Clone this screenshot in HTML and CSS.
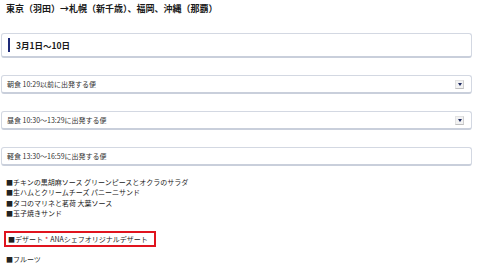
FILE: index.html
```html
<!DOCTYPE html>
<html lang="ja">
<head>
<meta charset="utf-8">
<link rel="stylesheet" href="styles.css">
</head>
<body>
<div class="page">
  <h1 class="title">東京（羽田）→札幌（新千歳）、福岡、沖縄（那覇）</h1>
  <div class="period"><span class="bar"></span><span class="period-text">3月1日～10日</span></div>
  <div class="select"><span>朝食 10:29以前に出発する便</span><span class="arrow"></span></div>
  <div class="select"><span>昼食 10:30～13:29に出発する便</span><span class="arrow"></span></div>
  <div class="select"><span>軽食 13:30～16:59に出発する便</span></div>
  <ul class="menu">
    <li>■チキンの黒胡麻ソース グリーンピースとオクラのサラダ</li>
    <li>■生ハムとクリームチーズ パニーニサンド</li>
    <li>■タコのマリネと茗荷 大葉ソース</li>
    <li>■玉子焼きサンド</li>
  </ul>
  <div class="highlight">■デザート <span class="star">*</span> ANAシェフオリジナルデザート</div>
  <p class="fruit">■フルーツ</p>
</div>
</body>
</html>
```
FILE: styles.css
```css
html, body {
  margin: 0;
  padding: 0;
  background: #fff;
}
body {
  font-family: "Noto Sans CJK JP", "Noto Sans", sans-serif;
  color: #222;
}
.page {
  width: 471px;
  padding: 0 0 0 1px;
}
.title {
  margin: 0;
  padding: 3px 0 0 5px;
  font-size: 9px;
  line-height: 12px;
  font-weight: bold;
  color: #1a1a1a;
}
.period {
  margin-top: 18px;
  height: 22px;
  border: 1px solid #d3d8e2;
  border-bottom: 2px solid #c9cfdb;
  border-radius: 3px;
  display: flex;
  align-items: center;
  padding-left: 6px;
  gap: 6px;
}
.bar {
  width: 2px;
  height: 14px;
  background: #1e2a78;
}
.period-text {
  font-size: 8.5px;
  font-weight: bold;
  color: #1a1a1a;
}
.select {
  margin-top: 17px;
  height: 16px;
  border: 1px solid #d3d8e2;
  border-bottom: 2px solid #c9cfdb;
  border-radius: 3px;
  display: flex;
  align-items: center;
  justify-content: space-between;
  padding: 0 7px 0 5px;
  font-size: 7px;
  color: #333;
}
.arrow {
  width: 9px;
  height: 9px;
  background: #f2f2f2;
  border: 1px solid #e2e2e2;
  border-bottom-color: #bfbfbf;
  border-right-color: #cfcfcf;
  box-sizing: border-box;
  display: flex;
  align-items: center;
  justify-content: center;
}
.arrow::before {
  content: "";
  border-left: 2.5px solid transparent;
  border-right: 2.5px solid transparent;
  border-top: 3px solid #1e2a60;
}
.menu {
  list-style: none;
  margin: 11px 0 0 0;
  padding: 0 0 0 5px;
  font-size: 7px;
  line-height: 10.4px;
  color: #222;
}
.highlight {
  margin-top: 12px;
  margin-left: 3px;
  width: 146px;
  height: 12px;
  border: 2px solid #e0141e;
  display: flex;
  align-items: center;
  padding-left: 2px;
  font-size: 7px;
  color: #222;
  white-space: nowrap;
}
.star {
  color: #e0141e;
  margin: 0 2px;
}
.fruit {
  margin: 7px 0 0 0;
  padding-left: 5px;
  font-size: 7px;
  line-height: 10px;
  color: #222;
}
```
